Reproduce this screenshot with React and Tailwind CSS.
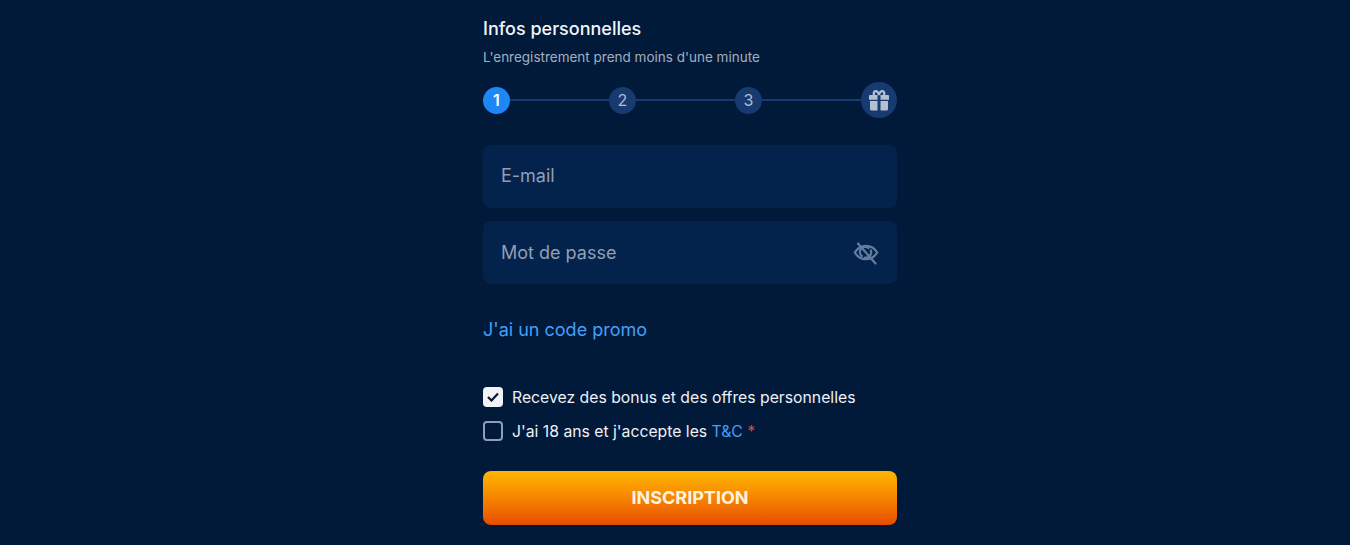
import React from "react";

function Gift() {
  return (
    <svg width="22" height="24" viewBox="0 0 22 24" fill="none">
      <path d="M6.500 7C4.500 5 6.300 2.600 8.800 3.400c1.400.5 2.200 3.600 2.200 3.600s.8-3.100 2.200-3.600C15.700 2.600 17.500 5 15.500 7" stroke="#b4bfd0" strokeWidth="2.200" />
      <path d="M1 8a1 1 0 0 1 1-1h7.500v4.800H1zM12.500 7H20a1 1 0 0 1 1 1v3.800h-8.500zM2 13h7.500v9.500H3.500A1.500 1.500 0 0 1 2 21zM12.500 13H20v8a1.500 1.500 0 0 1-1.500 1.500h-6z" fill="#b4bfd0" />
    </svg>
  );
}

function EyeOff() {
  return (
    <svg width="26" height="26" viewBox="0 0 26 26" fill="none" stroke="#647c9f" strokeWidth="2.200" strokeLinecap="round">
      <path d="M1.800 12.500C4.500 8 8.500 5.800 13 5.800s8.500 2.200 11.200 6.700C21.500 17 17.500 19.200 13 19.200S4.500 17 1.800 12.500z" />
      <path d="M8.800 16a5.200 5.200 0 0 1 6.700-8M17.800 10.500A5.200 5.200 0 0 1 12 17.500" />
      <path d="M5 3.500 22.500 23.500" />
    </svg>
  );
}

function Step({ n, active }) {
  return (
    <div className={`w-[27px] h-[27px] rounded-full flex items-center justify-center shrink-0 text-base ${active ? "bg-[#1f86f5] text-white font-semibold" : "bg-[#173a70] text-[#b0bdd2]"}`}>
      {n}
    </div>
  );
}

function Line() {
  return <div className="flex-1 h-[2px] bg-[#173a70]" />;
}

export default function App() {
  return (
    <div className="w-full h-[545px] overflow-hidden bg-[#011a3a] flex justify-center pl-[30px] font-['Inter',sans-serif]">
      <div className="w-[414px] flex flex-col">
        <h2 className="mt-[17px] text-lg leading-6 font-medium text-[#f1f4f8]">Infos personnelles</h2>
        <p className="mt-[6px] text-[13.5px] leading-[20px] text-[#a3afc0]">L'enregistrement prend moins d'une minute</p>
        <div className="mt-[15px] h-[36px] flex items-center">
          <Step n="1" active />
          <Line />
          <Step n="2" />
          <Line />
          <Step n="3" />
          <Line />
          <div className="w-9 h-9 rounded-full bg-[#173a70] flex items-center justify-center shrink-0">
            <Gift />
          </div>
        </div>
        <div className="mt-[27px] h-[63px] rounded-lg bg-[#03234d] flex items-center px-[18px] pb-[2px] text-lg text-[#929fb3]">E-mail</div>
        <div className="mt-[13px] h-[63px] rounded-lg bg-[#03234d] flex items-center justify-between pl-[18px] pr-[18px] text-lg text-[#929fb3]">
          <span>Mot de passe</span>
          <EyeOff />
        </div>
        <a className="mt-[32px] text-lg leading-7 text-[#43a0f8]">J'ai un code promo</a>
        <label className="mt-[43px] h-[20px] flex items-center gap-[9px] text-[15.75px] text-[#eef1f5]">
          <span className="w-5 h-5 rounded-[4px] bg-[#f1f3f7] flex items-center justify-center">
            <svg width="12" height="10" viewBox="0 0 12 10" fill="none" stroke="#0b1a33" strokeWidth="2.200">
              <path d="M1 5l3.500 3.500L11 1.500" />
            </svg>
          </span>
          <span className="pt-[2px]">Recevez des bonus et des offres personnelles</span>
        </label>
        <label className="mt-[14px] h-[20px] flex items-center gap-[9px] text-[15.75px] text-[#eef1f5]">
          <span className="w-5 h-5 rounded-[4px] border-2 border-[#8f9eb3]" />
          <span className="pt-[2px]">
            J'ai 18 ans et j'accepte les <span className="text-[#43a0f8]">T&amp;C</span> <span className="text-[#ef3e42]">*</span>
          </span>
        </label>
        <button className="mt-[30px] h-[54px] rounded-lg bg-gradient-to-b from-[#ffb700] to-[#e84a00] text-lg font-bold text-[#fff3e0]">
          INSCRIPTION
        </button>
      </div>
    </div>
  );
}
